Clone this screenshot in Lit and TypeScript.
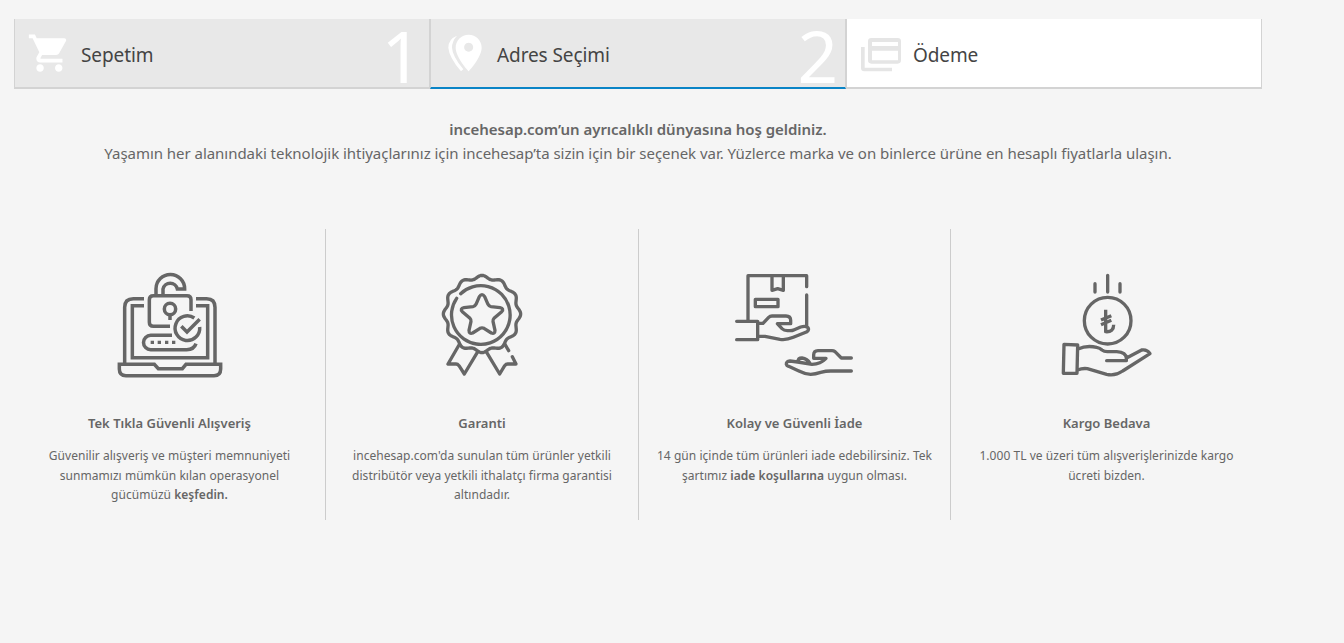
import { LitElement, html, svg, css } from "lit";
import { customElement } from "lit/decorators.js";

const scallop = (() => {
  const pts: string[] = [];
  for (let i = 0; i < 180; i++) {
    const t = (i / 180) * Math.PI * 2;
    const r = 111 + 5 * Math.cos(12 * t);
    pts.push(`${(171 + r * Math.sin(t)).toFixed(1)} ${(147 - r * Math.cos(t)).toFixed(1)}`);
  }
  return `M${pts.join("L")}Z`;
})();

const cart = svg`<svg class="glyph" viewBox="0 0 132 135">
  <path transform="translate(0 5) scale(5.6)" d="M7 18c-1.1 0-1.99.9-1.99 2S5.900 22 7 22s2-.9 2-2-.9-2-2-2zM1 2v2h2l3.600 7.590-1.350 2.450c-.16.28-.25.61-.25.96 0 1.100.9 2 2 2h12v-2H7.420c-.14 0-.25-.11-.25-.25l.03-.12.9-1.630h7.450c.75 0 1.410-.41 1.750-1.030l3.580-6.490c.08-.14.12-.31.12-.48 0-.55-.45-1-1-1H5.210l-.94-2H1zm16 16c-1.100 0-1.990.9-1.990 2s.89 2 1.990 2 2-.9 2-2-.9-2-2-2z"/>
</svg>`;

const pins = svg`<svg class="glyph" viewBox="69 57 132 135">
  <path fill-rule="evenodd" d="M146 74C124 74 107 91 107 113C107 142 146 184 146 184S185 142 185 113C185 91 168 74 146 74ZM146 98A13.500 13.500 0 1 1 145.900 98Z"/>
  <path d="M111 77Q85 87 85 113Q87 141 123 184L130 178Q97 138 96 113Q96 93 111 77Z"/>
</svg>`;

const cards = svg`<svg class="glyph card" viewBox="57 57 132 135">
  <path fill-rule="evenodd" d="M94 84H173Q183 84 183 94V151Q183 161 173 161H94Q84 161 84 151V94Q84 84 94 84ZM96 96V108H174V96ZM96 122V151H174V122Z"/>
  <path d="M63 111H74V173H156V184H73Q63 184 63 174Z"/>
</svg>`;

const laptop = svg`<svg class="art" viewBox="-15 0 420 360">
  <path d="M117 101H85Q59 101 59 127V296M273 101H305Q330 101 330 127V296M117 122H82V278H308V122H273"/>
  <path d="M43 298H148L160 311H232L243 298H347V312Q347 332 327 332H63Q43 332 43 312Z"/>
  <path d="M153 88V71A43 43 0 0 1 239 72H217A22 22 0 0 0 174 72V88"/>
  <path d="M195 184H145Q133 184 133 172V104Q133 92 145 92H246Q258 92 258 104V138"/>
  <circle cx="195" cy="132" r="17"/><path d="M195 149V165"/>
  <path d="M268 159A37 37 0 1 0 284 186M229 184L246 201L284 163"/>
  <path d="M201 211H137A21.500 21.500 0 0 0 137 254H245Q267 254 273 236"/>
  <path class="solid" d="M137 227h10v10h-10zM158 227h10v10h-10zM180 227h10v10h-10zM201 227h10v10h-10z"/>
</svg>`;

const badge = svg`<svg class="art round" viewBox="-39 0 420 360">
  <path d=${scallop}/>
  <path d="M107 86A88 88 0 1 1 95 100"/>
  <path d="M163 95Q171 83 179 95L189 118Q192 124 198 125L225 128Q238 131 230 140L207 160Q203 164 204 169L210 196Q210 208 199 204L177 190Q171 187 165 190L143 204Q132 208 132 196L138 169Q139 164 135 160L112 140Q104 131 117 128L144 125Q150 124 153 118Z"/>
  <path d="M102 240L69 297H93Q98 297 102 302L118 327L157 262M185 262L224 327L239 302Q243 297 248 297H273L262 275M251 257L240 238"/>
</svg>`;

const parcel = svg`<svg class="art round" viewBox="-15 0 420 360">
  <path d="M54 168V32H230V65M230 90V185M126 32V76L143 71L160 76V32M76 103H144V125H76Z"/>
  <path d="M20 169H83V224H20M86 175H99L116 157Q120 153 126 153H168Q182 153 182 166V176H142L156 191Q162 197 172 197H180Q187 197 193 194L212 186Q227 181 234 188Q238 194 231 200L190 217Q168 226 150 223L105 214H86"/>
  <path d="M364 279H334L315 260Q311 257 306 257H264Q251 257 251 270V280H288Q272 297 246 298L203 291L180 288Q168 289 169 298Q170 302 176 304L205 317Q225 327 242 328Q256 327 272 322Q288 318 302 318H364M204 290Q204 279 216 279Q232 281 240 295"/>
</svg>`;

const coin = svg`<svg class="art round" viewBox="-39 0 420 360">
  <path d="M135 56V81M173 31V81M210 56V81"/>
  <circle cx="173" cy="167" r="70"/>
  <path class="lira" d="M167 134V200Q191 202 191 179M153 165L184 152M153 179L184 166"/>
  <path d="M42 238L83 240L81 325H40ZM84 252Q110 240 140 247Q150 249 156 255Q162 260 172 260H200Q228 262 229 279V287H170M231 278L275 255Q291 252 300 266L218 318Q195 334 170 328L112 311Q97 309 83 315"/>
</svg>`;

@customElement("app-root")
export class AppRoot extends LitElement {
  static styles = css`
    :host { display: block; height: 643px; overflow: hidden; background: #f5f5f5; color: #666; font-family: "Noto Sans", sans-serif; box-sizing: border-box; padding: 19px 0 0 14px; }
    .page { width: 1248px; }
    .steps { display: grid; grid-template: 70px / repeat(3, 1fr); }
    .step { display: flex; align-items: flex-start; box-sizing: border-box; height: 70px; border: 1px solid #d3d3d3; border-width: 0 1px 2px; background: #e8e8e8; padding-left: 12px; color: #444; }
    .step.active { border-bottom-color: #0a84c6; }
    .step.open { background: #fff; }
    .glyph { width: 44px; height: 45px; margin-top: 10px; fill: #fff; flex: none; }
    .card { fill: #e5e5e5; }
    .label { flex: 1; margin-left: 10px; font-size: 19px; line-height: 72px; letter-spacing: -0.1px; white-space: nowrap; }
    .num { color: #fff; font-size: 71px; line-height: 73px; padding-right: 7px; }
    .intro { margin-top: 28px; text-align: center; font-size: 15px; line-height: 24px; white-space: nowrap; letter-spacing: -0.04px; }
    b { font-weight: 600; }
    .features { display: grid; grid-template-columns: 312px 313px 312px 311px; margin-top: 64px; height: 291px; }
    .feature { box-sizing: border-box; text-align: center; border-right: 1px solid #ccc; padding-top: 36px; }
    .feature:last-child { border-right: 0; }
    .art { display: block; width: 140px; height: 120px; margin-left: 86px; fill: none; stroke: #666; stroke-width: 10.5; }
    .round { stroke-linecap: round; stroke-linejoin: round; stroke-width: 10; }
    .solid { fill: #666; stroke: none; }
    .lira { stroke-linecap: butt; }
    h3 { margin: 27px 0 0; font-size: 13px; line-height: 22px; font-weight: 600; }
    p { margin: 12px 0 0; font-size: 12px; line-height: 19.500px; letter-spacing: 0.04px; white-space: nowrap; }
  `;

  render() {
    return html`<main class="page">
      <nav class="steps">
        <div class="step">${cart}<span class="label">Sepetim</span><span class="num">1</span></div>
        <div class="step active">${pins}<span class="label">Adres Seçimi</span><span class="num">2</span></div>
        <div class="step open">${cards}<span class="label">Ödeme</span></div>
      </nav>
      <section class="intro">
        <div><b>incehesap.com’un ayrıcalıklı dünyasına hoş geldiniz.</b></div>
        <div>Yaşamın her alanındaki teknolojik ihtiyaçlarınız için incehesap’ta sizin için bir seçenek var. Yüzlerce marka ve on binlerce ürüne en hesaplı fiyatlarla ulaşın.</div>
      </section>
      <section class="features">
        <article class="feature">${laptop}<h3>Tek Tıkla Güvenli Alışveriş</h3>
          <p>Güvenilir alışveriş ve müşteri memnuniyeti<br>sunmamızı mümkün kılan operasyonel<br>gücümüzü <b>keşfedin.</b></p></article>
        <article class="feature">${badge}<h3>Garanti</h3>
          <p>incehesap.com'da sunulan tüm ürünler yetkili<br>distribütör veya yetkili ithalatçı firma garantisi<br>altındadır.</p></article>
        <article class="feature">${parcel}<h3>Kolay ve Güvenli İade</h3>
          <p>14 gün içinde tüm ürünleri iade edebilirsiniz. Tek<br>şartımız <b>iade koşullarına</b> uygun olması.</p></article>
        <article class="feature">${coin}<h3>Kargo Bedava</h3>
          <p>1.000 TL ve üzeri tüm alışverişlerinizde kargo<br>ücreti bizden.</p></article>
      </section>
    </main>`;
  }
}
